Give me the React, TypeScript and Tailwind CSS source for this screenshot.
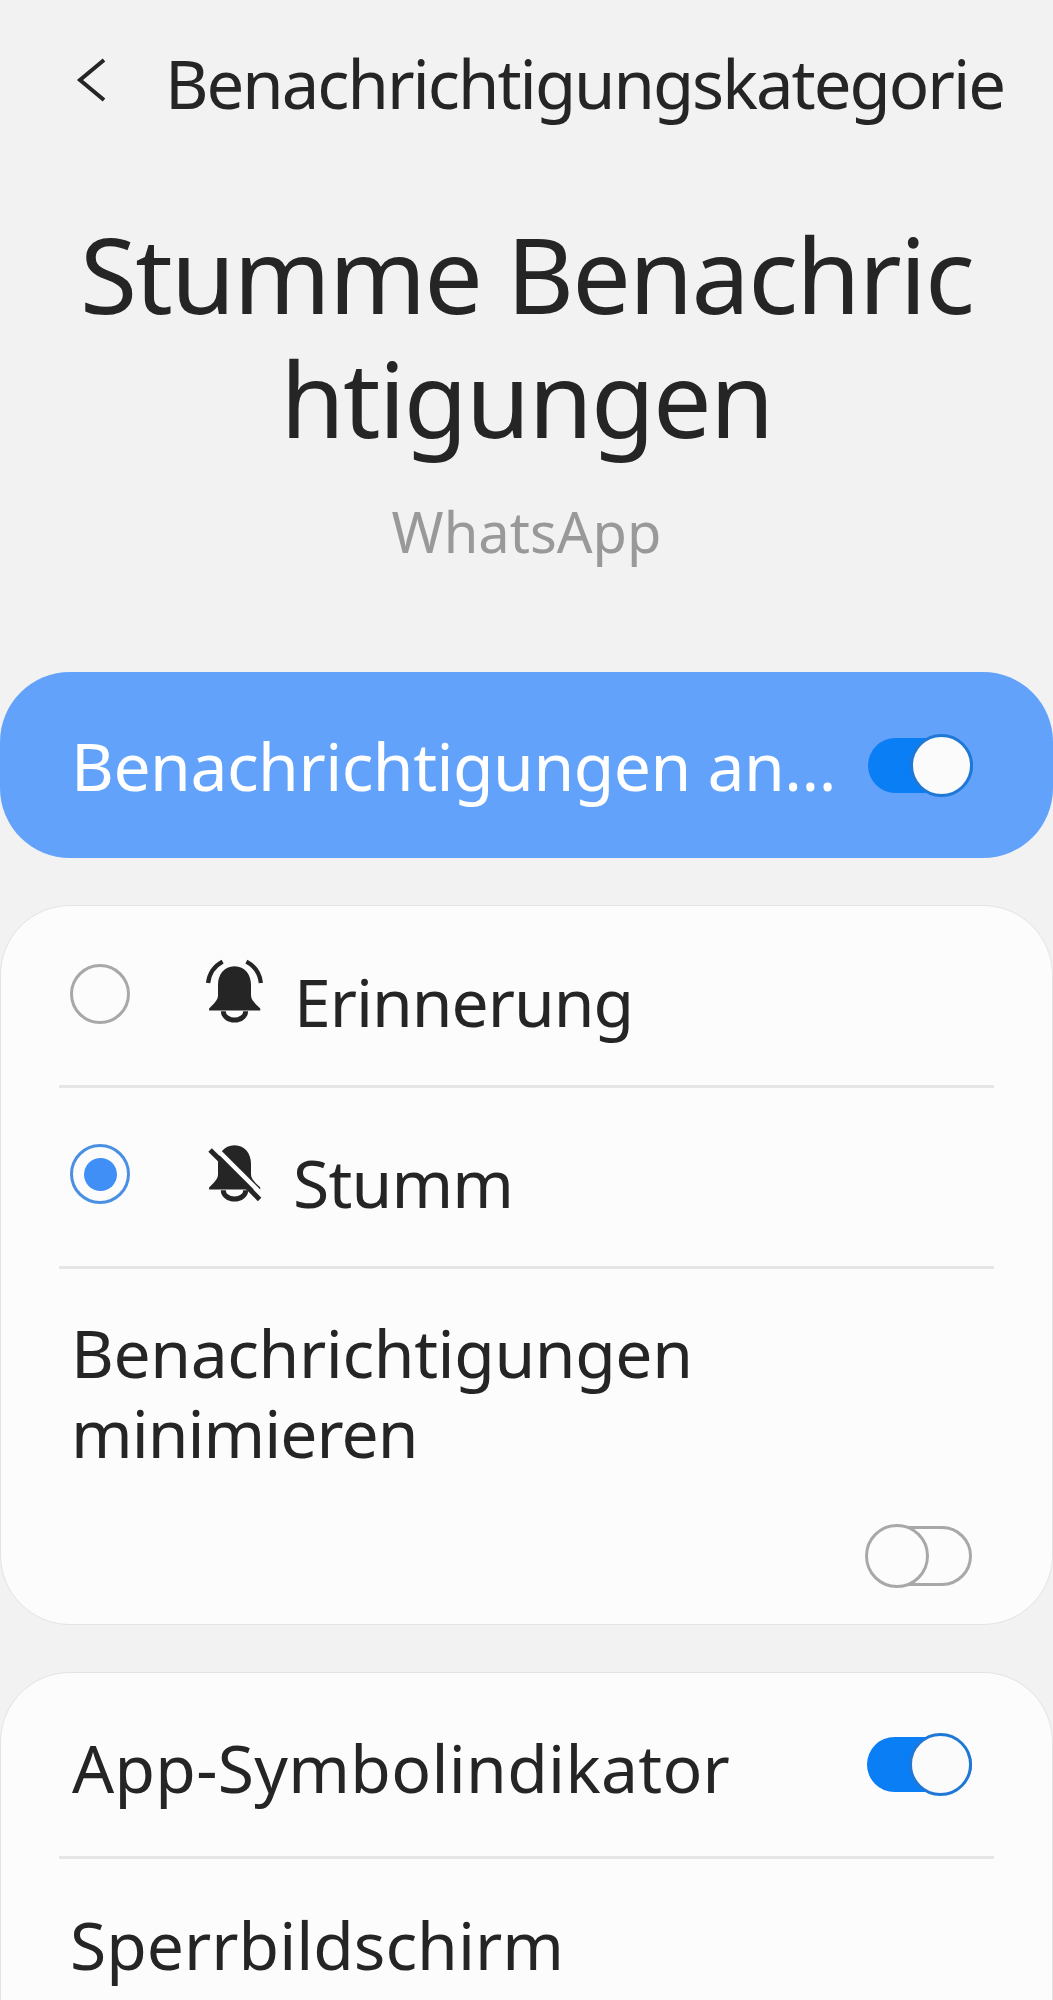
import React from 'react';

const font = "font-['Noto_Sans',sans-serif]";

function BellBody() {
  return (
    <>
      <path d="M92 22C60 22 42 48 42 78L42 110C42 125 30 135 15 150L15 156L170 156L170 150C155 135 142 125 142 110L142 78C142 48 124 22 92 22Z" fill="#252525" />
      <path d="M58 158a34 27 0 0 0 68 0" fill="none" stroke="#252525" strokeWidth="15" />
    </>
  );
}

function RingBell() {
  return (
    <svg viewBox="0 0 184 200" className="w-[61px] h-[66px] shrink-0">
      <BellBody />
      <path d="M12 73A84 84 0 0 1 56 8M172 73A84 84 0 0 0 128 8" fill="none" stroke="#252525" strokeWidth="13" />
    </svg>
  );
}

function MuteBell() {
  return (
    <svg viewBox="0 0 184 200" className="w-[61px] h-[66px] shrink-0">
      <BellBody />
      <path d="M30 26L180 176" fill="none" stroke="#fcfcfc" strokeWidth="14" />
      <path d="M18 36L168 186" fill="none" stroke="#252525" strokeWidth="15" />
    </svg>
  );
}

function Toggle({ on }: { on: boolean }) {
  if (on) {
    return (
      <div className="relative w-[105px] h-[55px] rounded-full bg-[#0a7ff5] shrink-0">
        <div className="absolute right-0 top-[-4px] w-[63px] h-[63px] rounded-full bg-[#fbfbfb] border-[3px] border-[#1f78d6]" />
      </div>
    );
  }
  return (
    <div className="relative w-[105px] h-[60px] rounded-full border-[3px] border-[#a8a8a8] shrink-0">
      <div className="absolute left-[-5px] top-[-5px] w-[64px] h-[64px] rounded-full bg-[#fcfcfc] border-[3px] border-[#a8a8a8]" />
    </div>
  );
}

function Radio({ on }: { on: boolean }) {
  return (
    <div className={`w-[60px] h-[60px] rounded-full border-[3px] flex items-center justify-center shrink-0 ${on ? 'border-[#4a90e2]' : 'border-[#a8a8a8]'}`}>
      {on && <div className="w-[33px] h-[33px] rounded-full bg-[#3f8ff7]" />}
    </div>
  );
}

function Divider() {
  return <div className="h-[3px] mx-[58px] bg-[#e6e6e6]" />;
}

export default function App() {
  return (
    <div className={`w-[1053px] h-[2000px] overflow-hidden bg-[#f2f2f2] text-[#252525] ${font}`}>
      {/* Header */}
      <div className="h-[172px] flex items-start pl-[74px] pt-[56px]">
        <svg viewBox="0 0 32 48" className="w-[32px] h-[48px] shrink-0">
          <path d="M30 4L6 24L30 44" fill="none" stroke="#252525" strokeWidth="4" />
        </svg>
        <span className="ml-[59px] mt-[-6px] text-[67px] leading-[66px] tracking-[-2px] whitespace-nowrap">Benachrichtigungskategorie</span>
      </div>

      {/* Title */}
      <div className="h-[500px] text-center">
        <div className="pt-[40px] text-[104px] leading-[124px] tracking-[-1.8px]">
          Stumme Benachric
          <br />
          htigungen
        </div>
        <div className="mt-[36px] text-[56px] leading-[70px] text-[#999999]">WhatsApp</div>
      </div>

      {/* Master switch */}
      <div className="h-[186px] rounded-[70px] bg-[#62a2fb] flex items-center justify-between pl-[71px] pr-[80px]">
        <span className="text-[66px] leading-[80px] text-white tracking-[-0.5px] whitespace-nowrap">Benachrichtigungen an...</span>
        <Toggle on />
      </div>

      {/* Mode card */}
      <div className="mt-[47px] h-[720px] rounded-[70px] bg-[#fcfcfc] border border-[#e3e3e3]">
        <div className="h-[179px] flex items-start pl-[69px] pt-[55px]">
          <div className="mt-[3px]">
            <Radio on={false} />
          </div>
          <div className="ml-[74px] mt-[-2px]">
            <RingBell />
          </div>
          <span className="ml-[29px] text-[66px] leading-[80px] tracking-[-1px]">Erinnerung</span>
        </div>
        <Divider />
        <div className="h-[178px] flex items-start pl-[69px] pt-[54px]">
          <div className="mt-[2px]">
            <Radio on />
          </div>
          <div className="ml-[74px] mt-[-4px]">
            <MuteBell />
          </div>
          <span className="ml-[28px] text-[66px] leading-[80px] tracking-[-0.8px]">Stumm</span>
        </div>
        <Divider />
        <div className="pl-[70px] pr-[80px] pt-[43px]">
          <div className="text-[66px] leading-[80px] tracking-[-0.4px]">
            Benachrichtigungen
            <br />
            <span className="tracking-[-1px]">minimieren</span>
          </div>
          <div className="flex justify-end mt-[54px]">
            <Toggle on={false} />
          </div>
        </div>
      </div>

      {/* Lower card */}
      <div className="mt-[47px] h-[400px] rounded-t-[70px] bg-[#fcfcfc] border border-[#e3e3e3]">
        <div className="h-[183px] flex items-center justify-between pl-[71px] pr-[80px]">
          <span className="text-[66px] leading-[80px] mt-[5px] tracking-[0.3px]">App-Symbolindikator</span>
          <Toggle on />
        </div>
        <Divider />
        <div className="pl-[69px] pt-[45px] text-[66px] leading-[80px]">Sperrbildschirm</div>
      </div>
    </div>
  );
}
